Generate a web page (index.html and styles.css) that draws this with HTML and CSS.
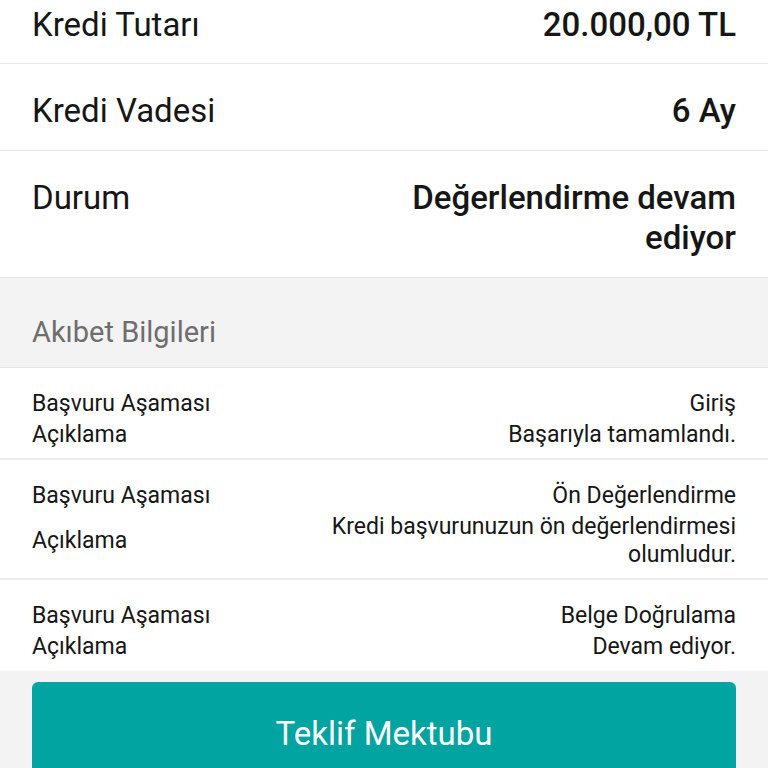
FILE: index.html
```html
<!DOCTYPE html>
<html lang="tr">
<head>
<meta charset="utf-8">
<title>Kredi Başvurusu</title>
<link rel="stylesheet" href="styles.css">
</head>
<body>
<div class="page">
  <div class="summary">
    <div class="row">
      <div class="label">Kredi Tutarı</div>
      <div class="value">20.000,00 TL</div>
    </div>
    <div class="row">
      <div class="label">Kredi Vadesi</div>
      <div class="value">6 Ay</div>
    </div>
    <div class="row">
      <div class="label">Durum</div>
      <div class="value">Değerlendirme devam ediyor</div>
    </div>
  </div>
  <div class="section-header">Akıbet Bilgileri</div>
  <div class="stages">
    <div class="stage">
      <div class="stage-line"><span class="s-label">Başvuru Aşaması</span><span class="s-value">Giriş</span></div>
      <div class="stage-line"><span class="s-label">Açıklama</span><span class="s-value">Başarıyla tamamlandı.</span></div>
    </div>
    <div class="stage">
      <div class="stage-line"><span class="s-label">Başvuru Aşaması</span><span class="s-value">Ön Değerlendirme</span></div>
      <div class="stage-line"><span class="s-label">Açıklama</span><span class="s-value">Kredi başvurunuzun ön değerlendirmesi olumludur.</span></div>
    </div>
    <div class="stage">
      <div class="stage-line"><span class="s-label">Başvuru Aşaması</span><span class="s-value">Belge Doğrulama</span></div>
      <div class="stage-line"><span class="s-label">Açıklama</span><span class="s-value">Devam ediyor.</span></div>
    </div>
  </div>
  <div class="footer">
    <button class="btn-primary" type="button">Teklif Mektubu</button>
  </div>
</div>
</body>
</html>
```
FILE: styles.css
```css
html, body {
  margin: 0;
  padding: 0;
  background: #ffffff;
  overflow: hidden;
  height: 768px;
}
body {
  font-family: Roboto, "Noto Sans", "Liberation Sans", sans-serif;
  color: #161616;
}
.page {
  display: flex;
  flex-direction: column;
}
.summary {
  margin-top: -22px;
}
.row {
  display: flex;
  justify-content: space-between;
  align-items: flex-start;
  padding: 27px 32px 19px;
  border-bottom: 1px solid #e6e6e6;
  font-size: 33px;
  line-height: 40px;
}
.row:first-child {
  padding-bottom: 18px;
}
.label {
  flex: none;
}
.value {
  font-weight: 500;
  text-align: right;
  max-width: 370px;
}
.section-header {
  background: #f3f3f3;
  padding: 37px 32px 18px;
  font-size: 29px;
  line-height: 34px;
  color: #6e6e6e;
  border-bottom: 1px solid #e4e4e4;
}
.stage {
  padding: 22px 32px 9px;
  border-bottom: 2px solid #ededed;
  display: flex;
  flex-direction: column;
  gap: 3px;
}
.stage:last-child {
  border-bottom: none;
  padding-bottom: 10px;
}
.stage-line {
  display: flex;
  justify-content: space-between;
  align-items: center;
  font-size: 23px;
  line-height: 28px;
}
.s-label {
  flex: none;
}
.s-value {
  text-align: right;
  max-width: 440px;
}
.footer {
  background: #f3f3f3;
  padding: 11px 32px 0;
  flex: 1;
}
.btn-primary {
  display: block;
  width: 100%;
  height: 104px;
  border: none;
  border-radius: 6px;
  background: #02a4a1;
  color: #ffffff;
  font-family: Roboto, "Noto Sans", "Liberation Sans", sans-serif;
  font-size: 33px;
  line-height: 40px;
  padding: 0;
}
```
